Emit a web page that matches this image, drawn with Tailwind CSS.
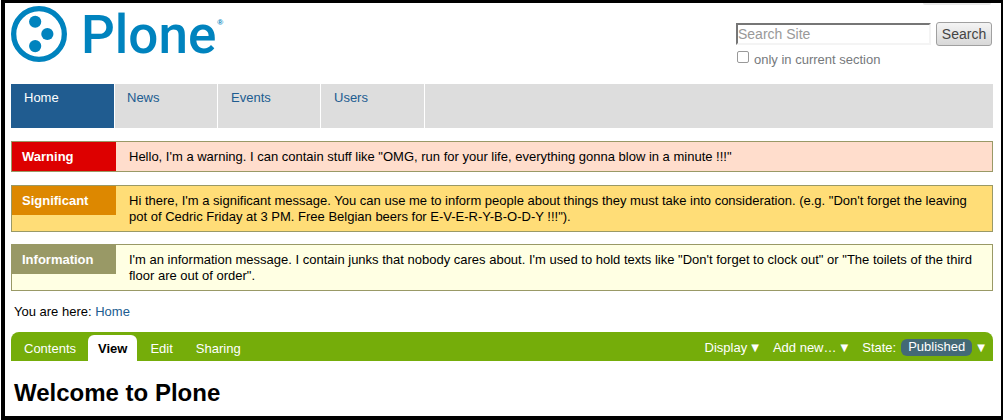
<!DOCTYPE html>
<html lang="en">
<head>
<meta charset="utf-8">
<title>Welcome to Plone</title>
<script src="https://cdn.jsdelivr.net/npm/@tailwindcss/browser@4"></script>
</head>
<body class="bg-white pl-px font-['Liberation_Sans',sans-serif] text-[13px] leading-4 text-black">
<div class="min-h-screen border-t-3 border-r-2 border-b-4 border-l-4 border-black pr-2 pl-[6px]">
  <header class="flex h-[81px] items-start justify-between">
    <a href="#" class="flex items-start gap-[14px] pt-[3px] text-[#0083be]" aria-label="Plone home">
      <svg class="size-[56px]" viewBox="0 0 57 57" fill="currentColor" aria-hidden="true">
        <circle cx="28.500" cy="28.500" r="25.800" fill="none" stroke="currentColor" stroke-width="5.400"/>
        <circle cx="24.600" cy="16" r="6.200"/>
        <circle cx="37" cy="28.500" r="6.200"/>
        <circle cx="24.600" cy="40.800" r="6.200"/>
      </svg>
      <span class="flex items-start gap-px"><span class="font-['Roboto',sans-serif] text-[53px] leading-[58px] font-medium">Plone</span><span class="mt-[11px] text-[8px] leading-3 font-bold">®</span></span>
    </a>
    <div class="flex flex-col items-end">
      <div class="mr-[2px] h-[2px] w-[68px] rounded-b bg-[#e8e8e8]"></div>
      <form class="mt-[17px] w-[257px] pr-px">
        <div class="flex items-center gap-[5px]">
          <input type="text" aria-label="Search Site" placeholder="Search Site" class="h-[22px] w-[195px] border-t-2 border-r-2 border-b-2 border-l-2 border-t-[#767676] border-r-[#f4f4f4] border-b-[#f4f4f4] border-l-[#767676] text-[14px] placeholder:text-[#999]">
          <button type="button" class="h-6 flex-1 rounded-[3px] border border-[#a0a0a0] bg-linear-to-b from-[#f4f4f4] to-[#d8d8d8] text-[14px] leading-5 text-[#444]">Search</button>
        </div>
        <label class="mt-[5px] flex items-start gap-[5px] pl-px text-[#76797c]"><input type="checkbox" class="size-3 appearance-none rounded-[2px] border border-[#999] bg-white"><span class="pt-px">only in current section</span></label>
      </form>
    </div>
  </header>

  <nav class="flex h-11 bg-[#ddd] text-[#205c90]" aria-label="Sections">
    <a href="#" class="w-[104px] border-r border-white bg-[#205c90] px-[13px] py-[6px] text-white">Home</a>
    <a href="#" class="w-[103px] border-r border-white px-3 py-[6px]">News</a>
    <a href="#" class="w-[103px] border-r border-white px-[13px] py-[6px]">Events</a>
    <a href="#" class="w-[104px] border-r border-white px-[13px] py-[6px]">Users</a>
  </nav>

  <dl class="mt-[13px] flex items-start border border-[#996] bg-[#fdc]">
    <dt class="w-[104px] shrink-0 bg-[#d00] px-[10px] pt-[7px] pb-[6px] font-bold text-white">Warning</dt>
    <dd class="px-[13px] pt-[7px] pb-[6px]">Hello, I'm a warning. I can contain stuff like "OMG, run for your life, everything gonna blow in a minute !!!"</dd>
  </dl>
  <dl class="mt-[13px] flex items-start border border-[#996] bg-[#fd7]">
    <dt class="w-[104px] shrink-0 bg-[#d80] px-[10px] pt-[7px] pb-[6px] font-bold text-white">Significant</dt>
    <dd class="px-[13px] pt-[7px] pb-[6px]">Hi there, I'm a significant message. You can use me to inform people about things they must take into consideration. (e.g. "Don't forget the leaving pot of Cedric Friday at 3 PM. Free Belgian beers for E-V-E-R-Y-B-O-D-Y !!!").</dd>
  </dl>
  <dl class="mt-3 flex items-start border border-[#996] bg-[#ffffe3]">
    <dt class="w-[104px] shrink-0 bg-[#996] px-[10px] pt-[7px] pb-[6px] font-bold text-white">Information</dt>
    <dd class="px-[13px] pt-[7px] pb-[6px]">I'm an information message. I contain junks that nobody cares about. I'm used to hold texts like "Don't forget to clock out" or "The toilets of the third floor are out of order".</dd>
  </dl>

  <div class="mt-[13px] px-[3px]">You are here: <a href="#" class="text-[#205c90]">Home</a></div>

  <div class="mt-3 flex h-[29px] items-end justify-between rounded-t-lg bg-[#75ad0a] text-white">
    <nav class="flex pl-[3px]" aria-label="Views">
      <a href="#" class="px-[10px] pt-[6px] pb-1">Contents</a>
      <a href="#" class="mr-[3px] ml-[2px] rounded-t-md bg-white px-[10px] pt-[6px] pb-1 font-bold text-black">View</a>
      <a href="#" class="px-[10px] pt-[6px] pb-1">Edit</a>
      <a href="#" class="ml-[3px] px-[10px] pt-[6px] pb-1">Sharing</a>
    </nav>
    <div class="flex items-center gap-[14px] pr-2 pb-[5px]">
      <button type="button" class="flex items-center gap-1">Display <span class="font-['DejaVu_Sans',sans-serif] text-[10px]">▼</span></button>
      <button type="button" class="flex items-center gap-1">Add new… <span class="font-['DejaVu_Sans',sans-serif] text-[10px]">▼</span></button>
      <button type="button" class="flex items-center gap-[5px]">State: <span class="rounded-md bg-[#436976] px-[7px] pb-px">Published</span> <span class="font-['DejaVu_Sans',sans-serif] text-[10px]">▼</span></button>
    </div>
  </div>

  <h1 class="mt-[17px] px-[3px] text-[24px] leading-[30px] font-bold">Welcome to Plone</h1>
</div>
</body>
</html>
